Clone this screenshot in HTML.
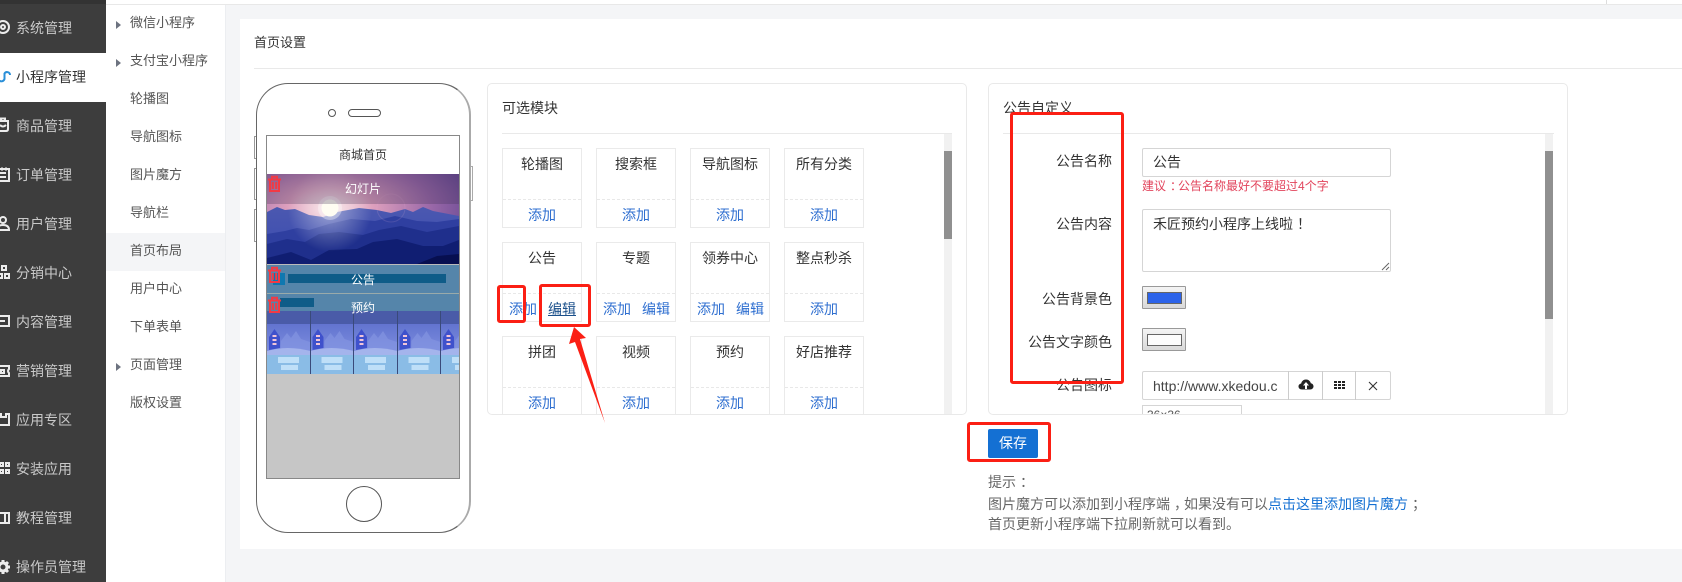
<!DOCTYPE html>
<html lang="zh-CN">
<head>
<meta charset="utf-8">
<title>首页设置</title>
<style>
html,body{margin:0;padding:0;width:1682px;height:582px;overflow:hidden;background:#f4f5f7}
body{position:relative;font-family:"Liberation Sans","Noto Sans CJK SC",sans-serif;font-size:14px;color:#333}
.a{position:absolute;box-sizing:border-box}
.t{position:absolute;line-height:20px;white-space:nowrap}
.m{color:#c9c9c9;left:16px;font-size:14px}
.s{left:130px;font-size:13px;color:#555}
.p{position:relative;left:4px}
.arr{position:absolute;left:116px;width:0;height:0;border-left:5px solid #6d7380;border-top:4px solid transparent;border-bottom:4px solid transparent}
.box{position:absolute;box-sizing:border-box;width:80px;height:80px;border:1px solid #eaeaea;background:#fff;text-align:center}
.box .n{position:absolute;left:0;right:0;top:5px;line-height:20px;font-size:14px;color:#333}
.box .d{position:absolute;left:0;right:0;top:50px;border-top:1px dashed #e8e8e8}
.box .l{position:absolute;top:56px;line-height:20px;font-size:14px;color:#2f6fd0;white-space:nowrap}
.lab{position:absolute;right:570px;line-height:20px;font-size:14px;color:#333;white-space:nowrap}
.red{position:absolute;box-sizing:border-box;border:3px solid #fb1f14;border-radius:3px}
.cp{position:absolute;box-sizing:border-box;left:1142px;width:44px;height:23px;border:1px solid #999;background:linear-gradient(#f4f4f4,#d9d9d9);border-radius:1px}
.cp i{position:absolute;left:4px;top:5px;border:1px solid #666;display:block;box-sizing:content-box;height:10px;width:33px}
</style>
</head>
<body>

<!-- top bar -->
<div class="a" style="left:0;top:0;width:1682px;height:5px;background:#fff;border-bottom:1px solid #e8e8e8"></div>
<div class="a" style="left:1606px;top:0;width:1px;height:4px;background:#ddd"></div>

<!-- dark sidebar -->
<div class="a" style="left:0;top:0;width:106px;height:582px;background:#3d3d3d"></div>
<div class="a" style="left:0;top:0;width:106px;height:4px;background:#333"></div>
<div class="a" style="left:0;top:53px;width:106px;height:49px;background:#fff"></div>

<svg class="a" style="left:0;top:0" width="14" height="582" viewBox="0 0 14 582" fill="none" stroke="#ececec" stroke-width="2">
  <circle cx="3" cy="27" r="6"/><circle cx="3" cy="27" r="2"/>
  <path d="M10 75c0-3-4-4-5.500-1.500V79c-1 3-5 3-6 .5" stroke="#2a8fd8" stroke-width="2"/>
  <path d="M-2 121h10v8q0 2-2 2H-2M1 121v-2.500h4V121M0 125q3 3 6 0"/>
  <path d="M-2 169h11v12H-2M0 173h6M0 177h6M2 167.500v3M6 167.500v3"/>
  <circle cx="3" cy="220" r="3"/><path d="M-3 230q0-5 6-5t6 5z"/>
  <path d="M2 266h4v4H2zM-2 274h4v4h-4zM5 274h4v4H5z"/>
  <path d="M-2 316h11v10H-2M0 321h5"/>
  <path d="M-2 366h11v3q-2 2 0 4v3H-2M1 370h3v3H1z"/>
  <path d="M-2 414h3v3h5v-3h3v11H-2"/>
  <path d="M0 463h3v3H0zM6 463h3v3H6zM0 470h3v3H0zM6 470h3v3H6z"/>
  <path d="M-2 513h11v10H-2M5 513v10"/>
  <circle cx="3" cy="567" r="4" stroke-width="3"/>
  <path d="M3 560v3M3 571v3M-4 567h3M7 567h3M8 562l-2 2M0 570l-2 2M8 572l-2-2M0 564l-2-2" stroke-width="3"/>
</svg>

<div class="t m" style="top:18px">系统管理</div>
<div class="t m" style="top:67px;color:#333">小程序管理</div>
<div class="t m" style="top:116px">商品管理</div>
<div class="t m" style="top:165px">订单管理</div>
<div class="t m" style="top:214px">用户管理</div>
<div class="t m" style="top:263px">分销中心</div>
<div class="t m" style="top:312px">内容管理</div>
<div class="t m" style="top:361px">营销管理</div>
<div class="t m" style="top:410px">应用专区</div>
<div class="t m" style="top:459px">安装应用</div>
<div class="t m" style="top:508px">教程管理</div>
<div class="t m" style="top:557px">操作员管理</div>

<!-- second sidebar -->
<div class="a" style="left:106px;top:5px;width:120px;height:577px;background:#fff;border-right:1px solid #eceef1"></div>
<div class="a" style="left:106px;top:233px;width:119px;height:38px;background:#f4f5f7"></div>
<div class="arr" style="top:21px"></div>
<div class="arr" style="top:59px"></div>
<div class="arr" style="top:363px"></div>
<div class="t s" style="top:13px">微信小程序</div>
<div class="t s" style="top:51px">支付宝小程序</div>
<div class="t s" style="top:89px">轮播图</div>
<div class="t s" style="top:127px">导航图标</div>
<div class="t s" style="top:165px">图片魔方</div>
<div class="t s" style="top:203px">导航栏</div>
<div class="t s" style="top:241px">首页布局</div>
<div class="t s" style="top:279px">用户中心</div>
<div class="t s" style="top:317px">下单表单</div>
<div class="t s" style="top:355px">页面管理</div>
<div class="t s" style="top:393px">版权设置</div>

<!-- main panel -->
<div class="a" style="left:240px;top:19px;width:1442px;height:530px;background:#fff"></div>
<div class="t" style="left:254px;top:33px;font-size:13px;color:#333">首页设置</div>
<div class="a" style="left:254px;top:68px;width:1428px;height:1px;background:#e9e9e9"></div>

<!-- phone -->
<div class="a" style="left:254px;top:136px;width:3px;height:23px;border:1px solid #999;background:#fff"></div>
<div class="a" style="left:254px;top:168px;width:3px;height:32px;border:1px solid #999;background:#fff"></div>
<div class="a" style="left:254px;top:209px;width:3px;height:33px;border:1px solid #999;background:#fff"></div>
<div class="a" style="left:469px;top:166px;width:4px;height:35px;border:1px solid #aaa;background:#fff"></div>
<div class="a" style="left:256px;top:83px;width:215px;height:450px;border:1px solid #666;border-right:2px solid #aaa;border-radius:32px;background:#fff"></div>
<div class="a" style="left:328px;top:109px;width:8px;height:8px;border:1px solid #555;border-radius:50%"></div>
<div class="a" style="left:348px;top:109px;width:33px;height:8px;border:1px solid #555;border-radius:4px"></div>
<div class="a" style="left:346px;top:486px;width:36px;height:36px;border:1px solid #555;border-radius:50%"></div>

<!-- phone screen -->
<div class="a" style="left:266px;top:135px;width:194px;height:344px;border:1px solid #888;background:#c6c6c6;overflow:hidden">
  <div class="a" style="left:0;top:0;width:192px;height:38px;background:#fff"></div>
  <svg class="a" style="left:0;top:38px" width="192" height="201" viewBox="0 0 192 201">
    <defs>
      <radialGradient id="sky" cx="0.33" cy="0.38" r="0.75">
        <stop offset="0" stop-color="#f5d8dc"/><stop offset="0.3" stop-color="#dd9fbd"/><stop offset="0.7" stop-color="#9a68a8"/><stop offset="1" stop-color="#6a4a94"/>
      </radialGradient>
      <radialGradient id="glow" cx="0.5" cy="0.5" r="0.5">
        <stop offset="0" stop-color="#fff" stop-opacity=".45"/><stop offset="1" stop-color="#fff" stop-opacity="0"/>
      </radialGradient>
      <linearGradient id="b1" x1="0" y1="0" x2="0" y2="1"><stop offset="0" stop-color="#4b58b0"/><stop offset="1" stop-color="#3a4bb0"/></linearGradient>
      <linearGradient id="mid" x1="0" y1="0" x2="0" y2="1"><stop offset="0" stop-color="#5668c8"/><stop offset="1" stop-color="#7f90e0"/></linearGradient>
      <pattern id="tile" x="0" y="137" width="43.500" height="63" patternUnits="userSpaceOnUse">
        <rect width="43.500" height="44" fill="url(#mid)"/>
        <rect width="43.500" height="13" fill="#4a5ba8"/>
        <path d="M14 30l6-8 4 5 5-7 5 8 9 3V40H14z" fill="#8494e2" opacity=".7"/>
        <path d="M0 40q20-6 43.500 0V44H0z" fill="#a4b4ec"/>
        <rect y="44" width="43.500" height="19" fill="#8abce6"/>
        <path d="M2 26l5.500-8 5.500 8v11l-11 2z" fill="#3f51cc"/>
        <rect x="5.500" y="24" width="4" height="2" fill="#f2c5d8"/><rect x="5.500" y="28" width="4" height="2" fill="#f2c5d8"/><rect x="5.500" y="32" width="4" height="2" fill="#f2c5d8"/>
        <rect x="11" y="46" width="21" height="6" fill="#bfdff8"/><rect x="14" y="54" width="17" height="5" fill="#bfdff8"/>
      </pattern>
    </defs>
    <rect width="192" height="90" fill="url(#sky)"/>
    <path d="M0 38L10 33 18 36 28 35 42 41 56 43 70 38 92 34 110 36 124 39 138 35 146 38 156 33 166 37 192 42V90H0z" fill="url(#b1)"/>
    <path d="M0 60L18 57 30 54 42 56 62 50 84 45 108 47 128 42 150 47 170 48 192 45V90H0z" fill="#2f3fa0"/>
    <path d="M0 70L20 65 38 68 52 60 72 58 96 61 112 56 134 52 160 58 192 52V90H0z" fill="#1f2f8c"/>
    <path d="M0 84L24 78 44 86 62 76 90 75 106 68 130 65 156 72 176 72 192 66V90H0z" fill="#101e72"/>
    <path d="M150 90L170 82 192 80V90z" fill="#070f50"/>
    <circle cx="63" cy="36" r="42" fill="url(#glow)"/>
    <circle cx="63" cy="34" r="12" fill="#fff" opacity=".35"/>
    <circle cx="63" cy="34" r="8.500" fill="#fffdf2"/>
    <circle cx="124" cy="34" r="14" fill="none" stroke="#e8b8d8" stroke-opacity=".15"/>
    <rect width="192" height="30" fill="#3d2f52" opacity=".28"/>
    <rect y="90" width="192" height="1" fill="#bbb"/>
    <rect y="91" width="192" height="28" fill="#5585aa"/>
    <rect x="21" y="100" width="158" height="9" fill="#0f5c88"/>
    <rect x="6" y="99" width="12" height="12" fill="#0f78b0"/>
    <rect y="119" width="192" height="1" fill="#9aa"/>
    <rect y="120" width="192" height="18" fill="#5585aa"/>
    <rect x="13" y="124" width="34" height="9" fill="#0f5c88"/>
    <rect y="137" width="192" height="63" fill="url(#tile)"/>
    <g stroke="#3a4a7a" stroke-width="1"><path d="M43.500 137V200M86.500 137V200M130.500 137V200M173.500 137V200"/></g>
    <g fill="none" stroke="#f23a44" stroke-width="2">
      <path d="M1 5.500h13M5 5.500V2.800h5v2.700M3 6V17h9V6M5.800 8v7M9.200 8v7"/>
      <path transform="translate(0,91)" d="M1 5.500h13M5 5.500V2.800h5v2.700M3 6V17h9V6M5.800 8v7M9.200 8v7"/>
      <path transform="translate(0,121)" d="M1 5.500h13M5 5.500V2.800h5v2.700M3 6V17h9V6M5.800 8v7M9.200 8v7"/>
    </g>
  </svg>
  <div class="t" style="left:0;width:192px;text-align:center;top:9px;font-size:12px;color:#333">商城首页</div>
  <div class="t" style="left:0;width:192px;text-align:center;top:43px;font-size:12px;color:#fff">幻灯片</div>
  <div class="t" style="left:0;width:192px;text-align:center;top:134px;font-size:12px;color:#fff">公告</div>
  <div class="t" style="left:0;width:192px;text-align:center;top:162px;font-size:12px;color:#fff">预约</div>
</div>

<!-- modules card -->
<div class="a" style="left:487px;top:83px;width:480px;height:332px;border:1px solid #e9e9e9;border-radius:5px;background:#fff;overflow:hidden"></div>
<div class="t" style="left:502px;top:98px;color:#333">可选模块</div>
<div class="a" style="left:502px;top:133px;width:450px;height:1px;background:#e9e9e9"></div>
<div class="a" style="left:944px;top:134px;width:8px;height:280px;background:#f1f1f1"></div>
<div class="a" style="left:944px;top:151px;width:8px;height:88px;background:#909090"></div>

<div class="box" style="left:502px;top:148px"><div class="n">轮播图</div><div class="d"></div><div class="l" style="left:25px">添加</div></div>
<div class="box" style="left:596px;top:148px"><div class="n">搜索框</div><div class="d"></div><div class="l" style="left:25px">添加</div></div>
<div class="box" style="left:690px;top:148px"><div class="n">导航图标</div><div class="d"></div><div class="l" style="left:25px">添加</div></div>
<div class="box" style="left:784px;top:148px"><div class="n">所有分类</div><div class="d"></div><div class="l" style="left:25px">添加</div></div>

<div class="box" style="left:502px;top:242px"><div class="n">公告</div><div class="d"></div><div class="l" style="left:6px">添加</div><div class="l" style="left:45px;color:#1a4f8a;text-decoration:underline">编辑</div></div>
<div class="box" style="left:596px;top:242px"><div class="n">专题</div><div class="d"></div><div class="l" style="left:6px">添加</div><div class="l" style="left:45px">编辑</div></div>
<div class="box" style="left:690px;top:242px"><div class="n">领券中心</div><div class="d"></div><div class="l" style="left:6px">添加</div><div class="l" style="left:45px">编辑</div></div>
<div class="box" style="left:784px;top:242px"><div class="n">整点秒杀</div><div class="d"></div><div class="l" style="left:25px">添加</div></div>

<div class="a" style="left:502px;top:336px;width:442px;height:78px;overflow:hidden">
  <div class="box" style="left:0;top:0"><div class="n">拼团</div><div class="d"></div><div class="l" style="left:25px">添加</div></div>
  <div class="box" style="left:94px;top:0"><div class="n">视频</div><div class="d"></div><div class="l" style="left:25px">添加</div></div>
  <div class="box" style="left:188px;top:0"><div class="n">预约</div><div class="d"></div><div class="l" style="left:25px">添加</div></div>
  <div class="box" style="left:282px;top:0"><div class="n">好店推荐</div><div class="d"></div><div class="l" style="left:25px">添加</div></div>
</div>

<!-- notice card -->
<div class="a" style="left:988px;top:83px;width:580px;height:332px;border:1px solid #e9e9e9;border-radius:5px;background:#fff"></div>
<div class="t" style="left:1003px;top:98px;color:#333">公告自定义</div>
<div class="a" style="left:1003px;top:133px;width:551px;height:1px;background:#e9e9e9"></div>
<div class="a" style="left:1545px;top:134px;width:8px;height:280px;background:#f1f1f1"></div>
<div class="a" style="left:1545px;top:151px;width:8px;height:168px;background:#909090"></div>

<div class="lab" style="top:151px">公告名称</div>
<div class="a" style="left:1142px;top:148px;width:249px;height:29px;border:1px solid #d5d5d5;border-radius:2px;padding-left:10px;line-height:26px;color:#333">公告</div>
<div class="t" style="left:1142px;top:176px;font-size:12px;color:#e2445c">建议<span class="p">：</span>公告名称最好不要超过4个字</div>
<div class="lab" style="top:214px">公告内容</div>
<div class="a" style="left:1142px;top:209px;width:249px;height:63px;border:1px solid #d5d5d5;border-radius:2px;padding:4px 10px;line-height:20px;color:#333">禾匠预约小程序上线啦<span class="p">！</span></div>
<svg class="a" style="left:1381px;top:262px" width="9" height="9"><path d="M1 8L8 1M5 8L8 5" stroke="#666" stroke-width="1" fill="none"/></svg>

<div class="lab" style="top:289px">公告背景色</div>
<div class="cp" style="top:286px"><i style="background:#2c63ea"></i></div>
<div class="lab" style="top:332px">公告文字颜色</div>
<div class="cp" style="top:328px"><i style="background:#fcfcfc"></i></div>

<div class="lab" style="top:375px">公告图标</div>
<div class="a" style="left:1142px;top:371px;width:249px;height:29px;border:1px solid #d5d5d5;border-radius:2px;background:#fff"></div>
<div class="t" style="left:1153px;top:376px;font-size:14px;color:#444">http://www.xkedou.c</div>
<div class="a" style="left:1288px;top:371px;width:1px;height:29px;background:#ccc"></div>
<div class="a" style="left:1322px;top:371px;width:1px;height:29px;background:#ccc"></div>
<div class="a" style="left:1355px;top:371px;width:1px;height:29px;background:#ccc"></div>
<svg class="a" style="left:1298px;top:378px" width="16" height="14" viewBox="0 0 16 14"><path d="M4 11.500C1.500 11.500 .5 9.800 .5 8.500c0-1.600 1.200-2.800 2.700-3C3.600 3 5.600 1.500 8 1.500s4.300 1.500 4.800 3.800c1.600.2 2.700 1.500 2.700 3.100 0 1.600-1.200 3.100-3.300 3.100z" fill="#222"/><path d="M8 4l3 3.500H9V11H7V7.500H5z" fill="#fff"/></svg>
<svg class="a" style="left:1334px;top:381px" width="11" height="8" viewBox="0 0 11 8" fill="#222"><path d="M0 0h3v2H0zM4 0h3v2H4zM8 0h3v2H8zM0 3h3v2H0zM4 3h3v2H4zM8 3h3v2H8zM0 6h3v2H0zM4 6h3v2H4zM8 6h3v2H8z"/></svg>
<svg class="a" style="left:1368px;top:381px" width="10" height="10"><path d="M1 1L9 9M9 1L1 9" stroke="#333" stroke-width="1.100"/></svg>
<div class="a" style="left:1142px;top:405px;width:100px;height:9px;border:1px solid #d5d5d5;border-bottom:0;overflow:hidden;background:#fff"><span class="t" style="left:4px;top:-1px;font-size:12px;color:#555">36×36</span></div>

<!-- save + tips -->
<div class="a" style="left:988px;top:429px;width:50px;height:29px;background:#1470d3;border-radius:2px;color:#fff;text-align:center;line-height:28px;font-size:14px">保存</div>
<div class="t" style="left:988px;top:472px;color:#666">提示<span class="p">：</span></div>
<div class="t" style="left:988px;top:494px;color:#666">图片魔方可以添加到小程序端<span class="p">，</span>如果没有可以<span style="color:#1470d3">点击这里添加图片魔方</span><span class="p">；</span></div>
<div class="t" style="left:988px;top:514px;color:#666">首页更新小程序端下拉刷新就可以看到。</div>

<!-- annotations -->
<div class="red" style="left:497px;top:285px;width:29px;height:38px"></div>
<div class="red" style="left:539px;top:284px;width:52px;height:43px"></div>
<div class="red" style="left:1010px;top:112px;width:114px;height:272px"></div>
<div class="red" style="left:967px;top:422px;width:84px;height:40px"></div>
<svg class="a" style="left:560px;top:320px" width="60" height="110" viewBox="560 320 60 110"><path d="M574 327L586 338 580 339 605 423 575 342 569 344z" fill="#fb1f14"/></svg>

</body>
</html>
